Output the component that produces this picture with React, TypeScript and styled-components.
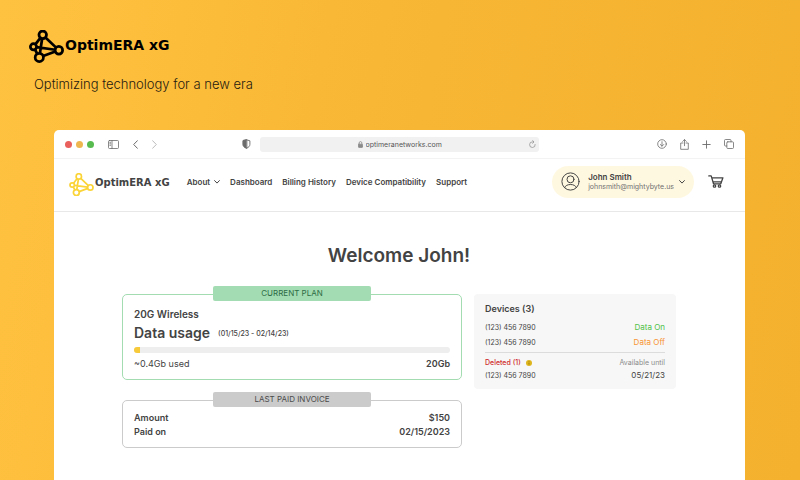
import React from "react";
import styled, { createGlobalStyle } from "styled-components";

const ink = "#434343";
const muted = "#6f6f6f";

const GlobalStyle = createGlobalStyle`
  *, *::before, *::after { box-sizing: border-box; }
  html, body { margin: 0; padding: 0; }
  body { font-family: Inter, sans-serif; color: ${ink}; }
  button { font: inherit; color: inherit; background: none; border: 0; padding: 0; cursor: pointer; }
  a { color: inherit; text-decoration: none; }
  h1, h2, h3, p { margin: 0; padding: 0; }
  svg { display: block; flex: none; }
`;

const Page = styled.div`
  display: flex;
  flex-direction: column;
  min-height: 100vh;
  padding: 30px 55px 0 54px;
  background: linear-gradient(100deg, #ffc240 0%, #f7b633 50%, #f3b12e 100%);
`;

const Hero = styled.header`
  height: 100px;
  margin-left: -25px;
  color: #000;
`;

const Brand = styled.a`
  display: inline-flex;
  align-items: center;
  gap: 1px;
`;

const Wordmark = styled.span<{ $size: number }>`
  font-family: "DejaVu Sans", sans-serif;
  font-weight: 700;
  font-size: ${(p) => p.$size}px;
  line-height: 16px;
  padding-bottom: 2px;
  white-space: nowrap;
`;

const Tagline = styled.p`
  padding-left: 5px;
  margin-top: 7px;
  font-size: 13px;
  line-height: 20px;
  font-weight: 300;
  color: #1f1a10;
`;

const Browser = styled.div`
  flex: 1;
  display: flex;
  flex-direction: column;
  background: #fff;
  border-radius: 5px 5px 0 0;
`;

const Toolbar = styled.div`
  display: grid;
  grid-template-columns: 1fr 279px 1fr;
  align-items: center;
  height: 29px;
  padding: 0 11px;
  border-bottom: 1px solid #f3f3f3;
  color: #6b6b6b;
`;

const ToolGroup = styled.div<{ $gap: number }>`
  display: flex;
  align-items: center;
  gap: ${(p) => p.$gap}px;
`;

const ToolLeft = styled.div`
  display: flex;
  align-items: center;
  justify-content: space-between;
  padding-right: 9px;
`;

const ToolRight = styled(ToolGroup)`
  justify-content: flex-end;
`;

const Dots = styled.div`
  display: flex;
  gap: 4px;
`;

const Dot = styled.button<{ $color: string }>`
  width: 7px;
  height: 7px;
  border-radius: 50%;
  background: ${(p) => p.$color};
`;

const IconButton = styled.button<{ $dim?: boolean }>`
  display: grid;
  place-items: center;
  opacity: ${(p) => (p.$dim ? 0.45 : 1)};
`;

const Address = styled.label`
  display: grid;
  grid-template-columns: 1fr auto 1fr;
  align-items: center;
  height: 15px;
  padding: 0 3px;
  border-radius: 3px;
  background: #f1f1f1;
`;

const AddressText = styled.span`
  grid-column: 2;
  display: flex;
  align-items: center;
  gap: 3px;
  color: #8a8a8a;
`;

const UrlInput = styled.input`
  width: 76px;
  height: 13px;
  padding: 1px 0 0;
  border: 0;
  outline: 0;
  background: none;
  font: 400 7px/12px Inter, sans-serif;
  color: #555;
`;

const Reload = styled(IconButton)`
  justify-self: end;
  color: #8a8a8a;
`;

const SiteHeader = styled.header`
  display: flex;
  align-items: center;
  height: 53px;
  padding: 0 21px 0 15px;
  border-bottom: 1px solid #e8e8e8;
`;

const Nav = styled.nav`
  display: flex;
  align-items: center;
  gap: 10px;
  flex: 1;
  margin-left: 17px;
  padding-bottom: 7px;
  font-size: 8px;
  line-height: 12px;
  font-weight: 600;
  white-space: nowrap;
`;

const NavButton = styled.button`
  display: flex;
  align-items: center;
  gap: 4px;
`;

const SiteBrand = styled(Brand)`
  padding-bottom: 1px;
`;

const Account = styled.button`
  display: flex;
  align-items: center;
  height: 32px;
  margin: 0 14px 7px 0;
  padding: 0 9px;
  border-radius: 16px;
  background: #fff8e1;
  text-align: left;
`;

const AccountText = styled.span`
  display: flex;
  flex-direction: column;
  margin: 0 5px 0 8px;
`;

const AccountName = styled.span`
  font-size: 8px;
  line-height: 10px;
  font-weight: 600;
`;

const AccountMail = styled.span`
  font-size: 7px;
  line-height: 9px;
  color: ${muted};
`;

const CartLink = styled.a`
  padding-bottom: 7px;
`;

const Main = styled.main`
  padding: 31px 69px 32px 68px;
`;

const Title = styled.h1`
  font-size: 19px;
  line-height: 26px;
  font-weight: 600;
  text-align: center;
`;

const Columns = styled.div`
  display: grid;
  grid-template-columns: 340fr 202fr;
  align-items: start;
  gap: 12px;
  margin-top: 25px;
`;

const Stack = styled.div`
  display: grid;
  gap: 20px;
`;

const Card = styled.section<{ $line: string }>`
  padding: 0 11px 8px;
  border: 1px solid ${(p) => p.$line};
  border-radius: 5px;
`;

const CardLabel = styled.h2<{ $bg: string; $fg: string }>`
  width: 50%;
  margin: -9px auto 0;
  border-radius: 2px;
  background: ${(p) => p.$bg};
  color: ${(p) => p.$fg};
  font-size: 8px;
  line-height: 15px;
  font-weight: 400;
  text-align: center;
`;

const PlanName = styled.h3`
  margin-top: 6px;
  font-size: 10px;
  line-height: 14px;
  font-weight: 600;
`;

const UsageRow = styled.div`
  display: flex;
  align-items: center;
  gap: 8px;
  margin-top: 3px;
`;

const UsageTitle = styled.h3`
  font-size: 14px;
  line-height: 18px;
  font-weight: 600;
`;

const Period = styled.span`
  padding-top: 2px;
  font-size: 7px;
  line-height: 16px;
  font-weight: 500;
`;

const Track = styled.div`
  height: 6px;
  margin-top: 5px;
  border-radius: 3px;
  overflow: hidden;
  background: #eee;
`;

const Fill = styled.div`
  height: 100%;
  background: #f7ca3a;
`;

const Row = styled.div<{ $bold?: boolean }>`
  display: flex;
  justify-content: space-between;
  font-size: 9px;
  line-height: 14px;
  font-weight: ${(p) => (p.$bold ? 600 : 400)};
`;

const UsageFigures = styled(Row)`
  margin-top: 4px;
`;

const Strong = styled.span`
  font-weight: 600;
`;

const InvoiceRows = styled.div`
  margin-top: 4px;
`;

const Devices = styled.section`
  padding: 8px 11px 7px;
  border-radius: 4px;
  background: #f7f7f7;
`;

const DevicesTitle = styled.h2`
  margin-bottom: 4px;
  font-size: 9px;
  line-height: 14px;
  font-weight: 600;
`;

const DeviceRow = styled.div`
  display: flex;
  justify-content: space-between;
  align-items: center;
  font-size: 8px;
  line-height: 15px;
`;

const Phone = styled.span`
  font-size: 7px;
`;

const Tone = styled.span<{ $color: string }>`
  color: ${(p) => p.$color};
`;

const Availability = styled.span`
  font-size: 7px;
  color: #8b8b8b;
`;

const DeletedGroup = styled.div`
  margin-top: 2px;
  padding-top: 3px;
  border-top: 1px solid #dcdcdc;
`;

const DeletedRow = styled(DeviceRow)`
  line-height: 13px;
`;

const Deleted = styled.span`
  display: flex;
  align-items: center;
  gap: 5px;
  font-size: 7px;
  font-weight: 500;
  color: #cf2b2b;
`;

type Node = { x: number; y: number; r: number };
const top: Node = { x: 40, y: 14, r: 11 };
const left: Node = { x: 13, y: 49, r: 9 };
const right: Node = { x: 87, y: 59, r: 11 };
const bottom: Node = { x: 30, y: 80, r: 12 };
const nodes = [top, left, right, bottom];
const edges: [Node, Node][] = [
  [top, left],
  [top, right],
  [top, bottom],
  [left, right],
  [left, bottom],
  [bottom, right],
];

function edgePath([a, b]: [Node, Node]) {
  const d = Math.hypot(b.x - a.x, b.y - a.y);
  const ux = (b.x - a.x) / d;
  const uy = (b.y - a.y) / d;
  return `M${a.x + ux * a.r} ${a.y + uy * a.r}L${b.x - ux * b.r} ${b.y - uy * b.r}`;
}

function NetworkMark({ width, color, stroke }: { width: number; color: string; stroke: number }) {
  return (
    <svg width={width} viewBox="0 0 102 96" fill="none" stroke={color} strokeWidth={stroke} aria-hidden="true">
      <path d={edges.map(edgePath).join("")} />
      {nodes.map((n) => (
        <circle key={n.x} cx={n.x} cy={n.y} r={n.r} />
      ))}
    </svg>
  );
}

type IconProps = { w: number; h?: number; box: string; stroke?: number; children: React.ReactNode };

function Icon({ w, h = w, box, stroke = 1, children }: IconProps) {
  return (
    <svg
      width={w}
      height={h}
      viewBox={box}
      fill="none"
      stroke="currentColor"
      strokeWidth={stroke}
      strokeLinecap="round"
      strokeLinejoin="round"
      aria-hidden="true"
    >
      {children}
    </svg>
  );
}

const Chevron = () => (
  <Icon w={6} h={4} box="0 0 6 4">
    <path d="M.6.6 3 3.1 5.4.6" />
  </Icon>
);

export default function App() {
  return (
    <>
      <GlobalStyle />
      <Page>
        <Hero>
          <Brand href="#">
            <NetworkMark width={35} color="#000" stroke={8} />
            <Wordmark $size={14}>OptimERA xG</Wordmark>
          </Brand>
          <Tagline>Optimizing technology for a new era</Tagline>
        </Hero>

        <Browser>
          <Toolbar>
            <ToolLeft>
              <ToolGroup $gap={14}>
                <Dots>
                  <Dot $color="#e9605c" aria-label="Close" />
                  <Dot $color="#efb74f" aria-label="Minimize" />
                  <Dot $color="#58bb50" aria-label="Zoom" />
                </Dots>
                <IconButton aria-label="Sidebar">
                  <Icon w={11} h={9} box="0 0 11 9" stroke={0.8}>
                    <rect x=".5" y=".5" width="10" height="8" rx="1" />
                    <path d="M4 .5v8M1.8 2.3h.9M1.8 3.8h.9M1.8 5.3h.9" />
                  </Icon>
                </IconButton>
                <IconButton aria-label="Back">
                  <Icon w={5} h={9} box="0 0 5 9">
                    <path d="M4.4.7.7 4.5l3.7 3.8" />
                  </Icon>
                </IconButton>
                <IconButton aria-label="Forward" $dim>
                  <Icon w={5} h={9} box="0 0 5 9">
                    <path d="m.6.7 3.7 3.8L.6 8.3" />
                  </Icon>
                </IconButton>
              </ToolGroup>
              <IconButton aria-label="Privacy report">
                <Icon w={9} h={10} box="0 0 9 10" stroke={0.9}>
                  <path d="M4.5.8 7.9 1.8v3.6c0 1.9-1.400 3-3.400 3.800C2.500 8.400 1.100 7.300 1.100 5.400V1.800z" />
                  <path d="M4.500.8 1.100 1.800v3.600c0 1.900 1.400 3 3.400 3.800z" fill="currentColor" />
                </Icon>
              </IconButton>
            </ToolLeft>
            <Address>
              <AddressText>
                <Icon w={5} h={7} box="0 0 5 7" stroke={0.8}>
                  <path d="M1.200 3V1.900a1.300 1.300 0 0 1 2.600 0V3" />
                  <rect x=".5" y="3.200" width="4" height="3.200" rx=".4" fill="currentColor" />
                </Icon>
                <UrlInput aria-label="Address" defaultValue="optimeranetworks.com" />
              </AddressText>
              <Reload aria-label="Reload">
                <Icon w={7} h={8} box="0 0 7 8" stroke={0.7}>
                  <path d="M6.200 4.500A2.800 2.800 0 1 1 3.600 1.900h1M3.600.5 5 1.900 3.600 3.300" />
                </Icon>
              </Reload>
            </Address>
            <ToolRight $gap={13}>
              <IconButton aria-label="Downloads">
                <Icon w={10} box="0 0 10 10" stroke={0.8}>
                  <circle cx="5" cy="5" r="4.300" />
                  <path d="M5 2.700v4.400M3.300 5.500 5 7.200l1.700-1.700" />
                </Icon>
              </IconButton>
              <IconButton aria-label="Share">
                <Icon w={9} h={11} box="0 0 9 11" stroke={0.8}>
                  <path d="M3 4H.7v6.300h7.600V4H6M4.500 6.700V.7M2.700 2.400 4.500.6l1.800 1.800" />
                </Icon>
              </IconButton>
              <IconButton aria-label="New tab">
                <Icon w={9} box="0 0 9 9" stroke={0.9}>
                  <path d="M4.500.8v7.400M.8 4.500h7.400" />
                </Icon>
              </IconButton>
              <IconButton aria-label="Tab overview">
                <Icon w={10} box="0 0 10 10" stroke={0.8}>
                  <rect x="2.800" y="2.800" width="6.700" height="6.700" rx="1" />
                  <path d="M2.800 7H1.500a1 1 0 0 1-1-1V1.500a1 1 0 0 1 1-1H6a1 1 0 0 1 1 1v1.300" />
                </Icon>
              </IconButton>
            </ToolRight>
          </Toolbar>

          <SiteHeader>
            <SiteBrand href="#">
              <NetworkMark width={25} color="#fbd438" stroke={7} />
              <Wordmark $size={10}>OptimERA xG</Wordmark>
            </SiteBrand>
            <Nav>
              <NavButton>
                About <Chevron />
              </NavButton>
              <a href="#">Dashboard</a>
              <a href="#">Billing History</a>
              <a href="#">Device Compatibility</a>
              <a href="#">Support</a>
            </Nav>
            <Account>
              <Icon w={19} box="0 0 19 19">
                <circle cx="9.500" cy="9.500" r="8.600" />
                <circle cx="9.500" cy="7.300" r="3.500" />
                <path d="M3.600 15.600c.8-2 3-3.100 5.900-3.100s5.100 1.100 5.900 3.100" />
              </Icon>
              <AccountText>
                <AccountName>John Smith</AccountName>
                <AccountMail>johnsmith@mightybyte.us</AccountMail>
              </AccountText>
              <Chevron />
            </Account>
            <CartLink href="#" aria-label="Cart">
              <Icon w={16} h={13} box="0 0 16 13" stroke={1.3}>
                <path d="M.8.9h2.400l2.300 7.900h7.300L14.900 2.800H3.800M5 6.800h8.300" />
                <circle cx="6.500" cy="11" r="1.200" />
                <circle cx="11.500" cy="11" r="1.200" />
              </Icon>
            </CartLink>
          </SiteHeader>

          <Main>
            <Title>Welcome John!</Title>
            <Columns>
              <Stack>
                <Card $line="#a3dcb1">
                  <CardLabel $bg="#a3dcb3" $fg="#2d6b45">CURRENT PLAN</CardLabel>
                  <PlanName>20G Wireless</PlanName>
                  <UsageRow>
                    <UsageTitle>Data usage</UsageTitle>
                    <Period>(01/15/23 - 02/14/23)</Period>
                  </UsageRow>
                  <Track role="progressbar" aria-label="Data usage" aria-valuenow={0.4} aria-valuemin={0} aria-valuemax={20}>
                    <Fill style={{ width: `${(0.4 / 20) * 100}%` }} />
                  </Track>
                  <UsageFigures>
                    <span>~0.4Gb used</span>
                    <Strong>20Gb</Strong>
                  </UsageFigures>
                </Card>
                <Card $line="#cbcbcb">
                  <CardLabel $bg="#cbcbcb" $fg="#4a4a4a">LAST PAID INVOICE</CardLabel>
                  <InvoiceRows>
                    <Row $bold>
                      <span>Amount</span>
                      <span>$150</span>
                    </Row>
                    <Row $bold>
                      <span>Paid on</span>
                      <span>02/15/2023</span>
                    </Row>
                  </InvoiceRows>
                </Card>
              </Stack>
              <Devices>
                <DevicesTitle>Devices (3)</DevicesTitle>
                <DeviceRow>
                  <Phone>(123) 456 7890</Phone>
                  <Tone $color="#4fc247">Data On</Tone>
                </DeviceRow>
                <DeviceRow>
                  <Phone>(123) 456 7890</Phone>
                  <Tone $color="#f79433">Data Off</Tone>
                </DeviceRow>
                <DeletedGroup>
                  <DeletedRow>
                    <Deleted>
                      Deleted (1)
                      <IconButton aria-label="About deleted devices">
                        <svg width="6" height="6" viewBox="0 0 6 6" aria-hidden="true">
                          <circle cx="3" cy="3" r="3" fill="#dfb51d" />
                          <path d="M3 2.600v2M3 1.200v.7" stroke="#8a6d00" strokeWidth=".7" />
                        </svg>
                      </IconButton>
                    </Deleted>
                    <Availability>Available until</Availability>
                  </DeletedRow>
                  <DeletedRow>
                    <Phone>(123) 456 7890</Phone>
                    <span>05/21/23</span>
                  </DeletedRow>
                </DeletedGroup>
              </Devices>
            </Columns>
          </Main>
        </Browser>
      </Page>
    </>
  );
}
